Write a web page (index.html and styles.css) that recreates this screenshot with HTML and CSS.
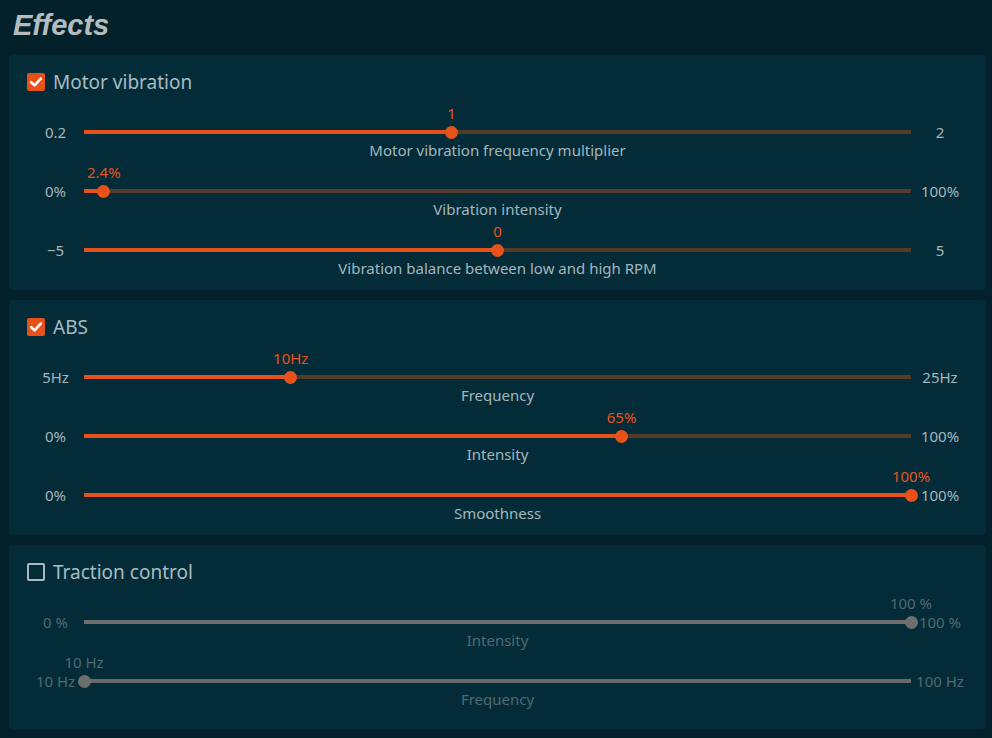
FILE: index.html
```html
<!DOCTYPE html>
<html>
<head>
<meta charset="utf-8">
<link rel="stylesheet" href="styles.css">
</head>
<body>
<div class="page">
  <h1 class="title">Effects</h1>

  <section class="panel">
    <label class="head"><span class="cb on"><svg viewBox="0 0 18 18"><path d="M4.2 9.2 L7.6 12.4 L13.8 5.6" fill="none" stroke="#fff" stroke-width="2.6" stroke-linecap="round" stroke-linejoin="round"/></svg></span>Motor vibration</label>
    <div class="row">
      <span class="min">0.2</span>
      <div class="track"><div class="fill" style="width:44.44%"></div><div class="thumb" style="left:44.44%"><span class="val">1</span></div></div>
      <span class="max">2</span>
      <span class="desc">Motor vibration frequency multiplier</span>
    </div>
    <div class="row">
      <span class="min">0%</span>
      <div class="track"><div class="fill" style="width:2.4%"></div><div class="thumb" style="left:2.4%"><span class="val">2.4%</span></div></div>
      <span class="max">100%</span>
      <span class="desc">Vibration intensity</span>
    </div>
    <div class="row">
      <span class="min">−5</span>
      <div class="track"><div class="fill" style="width:50%"></div><div class="thumb" style="left:50%"><span class="val">0</span></div></div>
      <span class="max">5</span>
      <span class="desc">Vibration balance between low and high RPM</span>
    </div>
  </section>

  <section class="panel">
    <label class="head"><span class="cb on"><svg viewBox="0 0 18 18"><path d="M4.2 9.2 L7.6 12.4 L13.8 5.6" fill="none" stroke="#fff" stroke-width="2.6" stroke-linecap="round" stroke-linejoin="round"/></svg></span>ABS</label>
    <div class="row">
      <span class="min">5Hz</span>
      <div class="track"><div class="fill" style="width:25%"></div><div class="thumb" style="left:25%"><span class="val">10Hz</span></div></div>
      <span class="max">25Hz</span>
      <span class="desc">Frequency</span>
    </div>
    <div class="row">
      <span class="min">0%</span>
      <div class="track"><div class="fill" style="width:65%"></div><div class="thumb" style="left:65%"><span class="val">65%</span></div></div>
      <span class="max">100%</span>
      <span class="desc">Intensity</span>
    </div>
    <div class="row">
      <span class="min">0%</span>
      <div class="track"><div class="fill" style="width:100%"></div><div class="thumb" style="left:100%"><span class="val">100%</span></div></div>
      <span class="max">100%</span>
      <span class="desc">Smoothness</span>
    </div>
  </section>

  <section class="panel disabled">
    <label class="head"><span class="cb"></span>Traction control</label>
    <div class="row">
      <span class="min">0 %</span>
      <div class="track"><div class="fill" style="width:100%"></div><div class="thumb" style="left:100%"><span class="val">100 %</span></div></div>
      <span class="max">100 %</span>
      <span class="desc">Intensity</span>
    </div>
    <div class="row">
      <span class="min">10 Hz</span>
      <div class="track"><div class="fill" style="width:0%"></div><div class="thumb" style="left:0%"><span class="val">10 Hz</span></div></div>
      <span class="max">100 Hz</span>
      <span class="desc">Frequency</span>
    </div>
  </section>
</div>
</body>
</html>
```

FILE: styles.css
```css
* { box-sizing: border-box; }
html, body {
  margin: 0;
  background: #03212a;
}
body {
  font-family: "Noto Sans", "Open Sans", sans-serif;
  color: #a3b6bc;
}
.page {
  padding: 0 6px 0 9px;
  display: flex;
  flex-direction: column;
  gap: 10px;
}
.title {
  margin: 0;
  height: 45px;
  padding: 8px 0 0 4px;
  font-family: "Liberation Sans", sans-serif;
  font-style: italic;
  font-weight: bold;
  font-size: 29px;
  line-height: 34px;
  color: #b3bcbe;
  letter-spacing: 0px;
}
.panel {
  background: #042c38;
  border-radius: 4px;
  padding: 16px 17px 13px 18px;
}
.panel.disabled { padding-bottom: 21px; }
.head {
  display: flex;
  align-items: center;
  gap: 8px;
  height: 22px;
  margin-bottom: 10px;
  font-size: 19px;
  color: #a7bcc2;
}
.cb {
  width: 18px;
  height: 18px;
  border-radius: 2px;
  border: 2px solid #a8babe;
  display: inline-block;
  flex: none;
}
.cb.on {
  background: #e8521a;
  border: none;
}
.cb svg { width: 18px; height: 18px; display: block; }

.row {
  display: grid;
  grid-template-columns: 57px 1fr 58px;
  grid-template-rows: 20px 18px 18px;
  margin-bottom: 3px;
  font-size: 15px;
}
.row:last-child { margin-bottom: 0; }
.min, .max {
  grid-row: 2;
  text-align: center;
  line-height: 18px;
  color: #a3b6bc;
  white-space: nowrap;
}
.min { grid-column: 1; }
.max { grid-column: 3; }
.desc {
  grid-row: 3;
  grid-column: 2;
  text-align: center;
  line-height: 18px;
  color: #a3b6bc;
}
.track {
  grid-row: 2;
  grid-column: 2;
  align-self: center;
  position: relative;
  height: 4px;
  background: #533b2c;
}
.fill {
  height: 100%;
  background: #e8521a;
}
.thumb {
  position: absolute;
  top: 50%;
  width: 13px;
  height: 13px;
  margin: -6.5px 0 0 -6.5px;
  border-radius: 50%;
  background: #e8521a;
}
.val {
  position: absolute;
  left: 50%;
  bottom: 17px;
  transform: translateX(-50%);
  white-space: nowrap;
  line-height: 18px;
  color: #e8521a;
}
.disabled .min, .disabled .max, .disabled .desc, .disabled .val { color: #4f6a73; }
.disabled .track { background: #6a6a6a; }
.disabled .fill, .disabled .thumb { background: #6e6e6e; }
```
